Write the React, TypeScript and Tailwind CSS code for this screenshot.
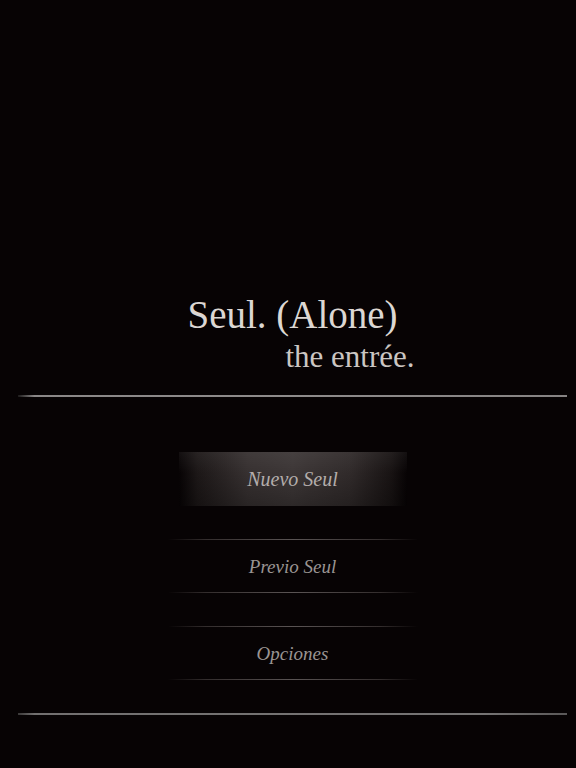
const items = [
  { label: 'Nuevo Seul', active: true },
  { label: 'Previo Seul', active: false },
  { label: 'Opciones', active: false },
];

function MenuItem({ label, active }: { label: string; active: boolean }) {
  if (active) {
    return (
      <div className="relative mx-auto flex h-[54px] w-[228px] items-center justify-center bg-[linear-gradient(to_right,#070304,#1c1717_8%,#363030_30%,#3c3636_50%,#302a2a_75%,#181313_93%,#070304)]">
        <div className="absolute inset-0 bg-[linear-gradient(to_bottom,rgba(255,255,255,0.05),rgba(0,0,0,0)_40%,rgba(0,0,0,0.25))]" />
        <span className="relative font-['Liberation_Serif',serif] text-[20px] italic leading-none text-[#b3adab]">
          {label}
        </span>
      </div>
    );
  }
  return (
    <div className="mx-auto flex h-[54px] w-[250px] flex-col justify-between">
      <div className="h-px bg-[linear-gradient(to_right,rgba(0,0,0,0),#332d2d_15%,#5a5454_50%,#332d2d_85%,rgba(0,0,0,0))]" />
      <div className="flex flex-1 items-center justify-center">
        <span className="font-['Liberation_Serif',serif] text-[19px] italic leading-none text-[#9a9492]">
          {label}
        </span>
      </div>
      <div className="h-px bg-[linear-gradient(to_right,rgba(0,0,0,0),#332d2d_15%,#5a5454_50%,#332d2d_85%,rgba(0,0,0,0))]" />
    </div>
  );
}

export default function App() {
  return (
    <div className="min-h-[768px] w-full bg-[#070304] pl-[18px] pr-[9px] pt-[295px]">
      <div className="mx-auto w-fit font-['Liberation_Serif',serif] text-[#dcd7d3]">
        <div className="text-[39px] leading-none">Seul. (Alone)</div>
        <div className="-mr-[17px] mt-[7px] text-right text-[31px] leading-none text-[#cbc6c2]">the entrée.</div>
      </div>

      <div className="mt-[23px] h-[2px] bg-[linear-gradient(to_right,#1c1a1a,#8a8787_3%,#8e8b8b_50%,#868383)]" />

      <div className="flex flex-col gap-[33px] pt-[55px]">
        {items.map(item => (
          <MenuItem key={item.label} label={item.label} active={item.active} />
        ))}
      </div>

      <div className="mt-[33px] h-[2px] bg-[linear-gradient(to_right,#3a3838,#727070_3%,#767474_85%,#5a5858)]" />
    </div>
  );
}
